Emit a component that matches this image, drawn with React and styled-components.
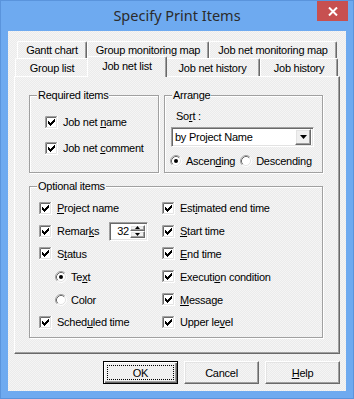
import React from "react"
import styled, { createGlobalStyle, css } from "styled-components"

const GlobalStyle = createGlobalStyle`
  html, body { margin: 0; padding: 0; background: #fff; }
  body { font-family: "Liberation Sans", Arial, sans-serif; }
`

// the dialog face has a faint 2px dither
const dither = css`
  background-color: #f0f0f0;
  background-image: repeating-conic-gradient(#ebebeb 0 25%, #f5f5f5 0 50%);
  background-size: 2px 2px;
  background-attachment: fixed;
`

const raised = css`
  border: 1px solid;
  border-color: #fff #696969 #696969 #fff;
  box-shadow: inset -1px -1px 0 #a0a0a0, inset 1px 1px 0 #e3e3e3;
`

const sunken = css`
  border: 1px solid;
  border-color: #a0a0a0 #fff #fff #a0a0a0;
  box-shadow: inset 1px 1px 0 #696969, inset -1px -1px 0 #e3e3e3;
`

const Window = styled.div`
  width: 354px;
  height: 399px;
  box-sizing: border-box;
  border: 1px solid #5a94dc;
  background: #6eaaf0;
  display: flex;
  flex-direction: column;
  font-family: "Liberation Sans", Arial, sans-serif;
  font-size: 11px;
  letter-spacing: -0.25px;
  color: #000;
`

const TitleBar = styled.div`
  height: 30px;
  display: grid;
  grid-template-columns: 1fr auto 1fr;
  align-items: start;
`

const Title = styled.div`
  grid-column: 2;
  font-family: "Noto Sans", "Open Sans", sans-serif;
  font-size: 14.5px;
  letter-spacing: 0;
  line-height: 29px;
  color: #2b2b2b;
`

const CloseButton = styled.div`
  grid-column: 3;
  justify-self: end;
  width: 31px;
  height: 20px;
  margin-right: 5px;
  background: #c75050;
  display: flex;
  align-items: center;
  justify-content: center;
`

const Client = styled.div`
  flex: 1;
  margin: 0 7px 7px 7px;
  padding: 10px 6px 0 6px;
  display: flex;
  flex-direction: column;
  ${dither}
`

const TabStrip = styled.div`
  display: flex;
  flex-direction: column;
`

const TabRow = styled.div`
  display: flex;
  align-items: flex-end;
  height: ${p => p.$h}px;
  padding-left: ${p => p.$indent}px;
`

const Tab = styled.div`
  box-sizing: border-box;
  position: relative;
  width: ${p => p.$w}px;
  height: ${p => (p.$selected ? p.$h + 3 : p.$h)}px;
  margin: ${p => (p.$selected ? "0 -2px -1px -2px" : "0")};
  padding-bottom: ${p => (p.$selected ? 3 : 0)}px;
  z-index: ${p => (p.$selected ? 2 : 0)};
  display: flex;
  align-items: center;
  justify-content: center;
  border-top: 1px solid #fff;
  border-left: 1px solid #fff;
  border-right: 1px solid #696969;
  border-radius: 2px 2px 0 0;
  box-shadow: inset -1px 0 0 #a0a0a0;
  white-space: nowrap;
  ${dither}
`

const TabPage = styled.div`
  box-sizing: border-box;
  position: relative;
  z-index: 1;
  height: 278px;
  border: 1px solid;
  border-color: #fff #696969 #696969 #fff;
  box-shadow: inset -1px -1px 0 #a0a0a0;
  padding: 18px 0 0 14px;
  display: flex;
  flex-direction: column;
  gap: 13px;
`

const TopGroups = styled.div`
  display: flex;
  gap: 5px;
`

const Group = styled.div`
  position: relative;
  box-sizing: border-box;
  width: ${p => p.$w}px;
  height: ${p => p.$h}px;
  border: 1px solid #a0a0a0;
  box-shadow: 1px 1px 0 #fff, inset 1px 1px 0 #fff;
`

const Caption = styled.span`
  position: absolute;
  top: -7px;
  left: 7px;
  padding: 0 1px;
  line-height: 13px;
  ${dither}
`

const RequiredList = styled.div`
  display: flex;
  flex-direction: column;
  gap: 10px;
  padding: 18px 0 0 15px;
`

const Row = styled.div`
  display: flex;
  align-items: center;
  gap: ${p => p.$gap || 5}px;
  height: 16px;
  padding-left: ${p => p.$indent || 0}px;
  white-space: nowrap;
`

const ArrangeBody = styled.div`
  display: flex;
  flex-direction: column;
`

const SortLabel = styled.div`
  line-height: 13px;
  margin: 14px 0 0 11px;
`

const Combo = styled.div`
  box-sizing: border-box;
  width: 143px;
  height: 20px;
  margin: 4px 0 0 6px;
  ${sunken}
  background: #fff;
  display: flex;
  align-items: center;
  padding: 2px 2px 2px 3px;
`

const ComboText = styled.span`
  flex: 1;
`

const DropButton = styled.div`
  box-sizing: border-box;
  width: 16px;
  height: 16px;
  ${raised}
  background: #f0f0f0;
  display: flex;
  align-items: center;
  justify-content: center;
`

const RadioLine = styled.div`
  display: flex;
  align-items: center;
  gap: 5px;
  margin: 6px 0 0 5px;
`

const OptionalGrid = styled.div`
  display: grid;
  grid-template-columns: 123px auto;
  grid-template-rows: repeat(6, 22.8px);
  grid-auto-flow: column;
  align-items: center;
  padding: 10px 0 0 9px;
`

const Spin = styled.div`
  box-sizing: border-box;
  width: 39px;
  height: 19px;
  margin-left: auto;
  margin-right: 14px;
  ${sunken}
  background: #fff;
  display: flex;
  align-items: center;
  padding: 2px;
`

const SpinValue = styled.span`
  flex: 1;
  text-align: right;
  padding-right: 1px;
`

const SpinArrows = styled.div`
  display: flex;
  flex-direction: column;
  width: 15px;
  height: 100%;
`

const SpinHalf = styled.div`
  box-sizing: border-box;
  flex: 1;
  ${raised}
  background: #f0f0f0;
  display: flex;
  align-items: center;
  justify-content: center;
`

const ButtonBar = styled.div`
  display: flex;
  justify-content: flex-end;
  gap: 6px;
  margin-top: 7px;
`

const Button = styled.div`
  box-sizing: border-box;
  position: relative;
  width: 75px;
  height: 23px;
  display: flex;
  align-items: center;
  justify-content: center;
  ${dither}
  ${raised}
  ${p => p.$default && css`
    border: 1px solid #000;
    box-shadow: inset 1px 1px 0 #fff, inset -1px -1px 0 #696969, inset -2px -2px 0 #a0a0a0;
    &::after {
      content: "";
      position: absolute;
      inset: 3px;
      border: 1px dotted #000;
    }
  `}
`

const checkPath = [[3, 5], [4, 6], [5, 7], [6, 6], [7, 5], [8, 4], [9, 3]]
  .map(([x, y]) => `M${x} ${y}h1v3h-1z`)
  .join(" ")

const CheckIcon = () => (
  <svg width="13" height="13" viewBox="0 0 13 13">
    <rect width="13" height="13" fill="#fff" />
    <path d="M0.5 12V0.5H12" stroke="#a0a0a0" fill="none" />
    <path d="M1.5 11V1.5H11" stroke="#696969" fill="none" />
    <path d="M0 12.5H12.5V0" stroke="#fff" fill="none" />
    <path d="M1 11.5H11.5V1" stroke="#e3e3e3" fill="none" />
    <path d={checkPath} fill="#000" />
  </svg>
)

const RadioIcon = ({ on }) => (
  <svg width="12" height="12" viewBox="0 0 12 12">
    <circle cx="6" cy="6" r="5" fill="#fff" />
    <path d="M2.11 9.89A5.5 5.5 0 0 1 9.89 2.11" stroke="#a0a0a0" fill="none" />
    <path d="M9.89 2.11A5.5 5.5 0 0 1 2.11 9.89" stroke="#fff" fill="none" />
    <path d="M2.82 9.18A4.5 4.5 0 0 1 9.18 2.82" stroke="#696969" fill="none" />
    <path d="M9.18 2.82A4.5 4.5 0 0 1 2.82 9.18" stroke="#e3e3e3" fill="none" />
    {on && <circle cx="6" cy="6" r="2" fill="#000" />}
  </svg>
)

const Check = ({ children }) => (
  <Row>
    <CheckIcon />
    <span>{children}</span>
  </Row>
)

const Radio = ({ on, indent, children }) => (
  <Row $indent={indent} $gap={4}>
    <RadioIcon on={on} />
    <span>{children}</span>
  </Row>
)

const backTabs = [
  { label: "Gantt chart", w: 70 },
  { label: "Group monitoring map", w: 122 },
  { label: "Job net monitoring map", w: 128 },
]

const frontTabs = [
  { label: "Group list", w: 74 },
  { label: "Job net list", w: 80, selected: true },
  { label: "Job net history", w: 95 },
  { label: "Job history", w: 78 },
]

export default function App() {
  return (
    <>
      <GlobalStyle />
      <Window>
        <TitleBar>
          <Title>Specify Print Items</Title>
          <CloseButton>
            <svg width="10" height="9" viewBox="0 0 10 9">
              <path d="M1 0.5L9 8.5M9 0.5L1 8.5" stroke="#fff" strokeWidth="2" />
            </svg>
          </CloseButton>
        </TitleBar>
        <Client>
          <TabStrip>
            <TabRow $h={17} $indent={3}>
              {backTabs.map(t => (
                <Tab key={t.label} $w={t.w} $h={17}>{t.label}</Tab>
              ))}
            </TabRow>
            <TabRow $h={18} $indent={1}>
              {frontTabs.map(t => (
                <Tab key={t.label} $w={t.w} $h={18} $selected={t.selected}>{t.label}</Tab>
              ))}
            </TabRow>
          </TabStrip>
          <TabPage>
            <TopGroups>
              <Group $w={130} $h={78}>
                <Caption>Required items</Caption>
                <RequiredList>
                  <Check>Job net <u>n</u>ame</Check>
                  <Check>Job net <u>c</u>omment</Check>
                </RequiredList>
              </Group>
              <Group $w={159} $h={78}>
                <Caption>Arrange</Caption>
                <ArrangeBody>
                  <SortLabel>So<u>r</u>t :</SortLabel>
                  <Combo>
                    <ComboText>by Project Name</ComboText>
                    <DropButton>
                      <svg width="7" height="4" viewBox="0 0 7 4">
                        <path d="M0 0h7L3.5 4z" fill="#000" />
                      </svg>
                    </DropButton>
                  </Combo>
                  <RadioLine>
                    <Radio on>Ascen<u>d</u>ing</Radio>
                    <Radio>Descendin<u>g</u></Radio>
                  </RadioLine>
                </ArrangeBody>
              </Group>
            </TopGroups>
            <Group $w={294} $h={152}>
              <Caption>Optional items</Caption>
              <OptionalGrid>
                <Check><u>P</u>roject name</Check>
                <Row>
                  <CheckIcon />
                  <span>Remar<u>k</u>s</span>
                  <Spin>
                    <SpinValue>32</SpinValue>
                    <SpinArrows>
                      <SpinHalf>
                        <svg width="5" height="3" viewBox="0 0 5 3"><path d="M2.5 0L5 3H0z" fill="#000" /></svg>
                      </SpinHalf>
                      <SpinHalf>
                        <svg width="5" height="3" viewBox="0 0 5 3"><path d="M0 0h5L2.5 3z" fill="#000" /></svg>
                      </SpinHalf>
                    </SpinArrows>
                  </Spin>
                </Row>
                <Check>S<u>t</u>atus</Check>
                <Radio on indent={16}>Te<u>x</u>t</Radio>
                <Radio indent={16}>Color</Radio>
                <Check>Sched<u>u</u>led time</Check>
                <Check>Est<u>i</u>mated end time</Check>
                <Check><u>S</u>tart time</Check>
                <Check><u>E</u>nd time</Check>
                <Check>Executi<u>o</u>n condition</Check>
                <Check><u>M</u>essage</Check>
                <Check>Upper le<u>v</u>el</Check>
              </OptionalGrid>
            </Group>
          </TabPage>
          <ButtonBar>
            <Button $default>OK</Button>
            <Button>Cancel</Button>
            <Button><span><u>H</u>elp</span></Button>
          </ButtonBar>
        </Client>
      </Window>
    </>
  )
}
